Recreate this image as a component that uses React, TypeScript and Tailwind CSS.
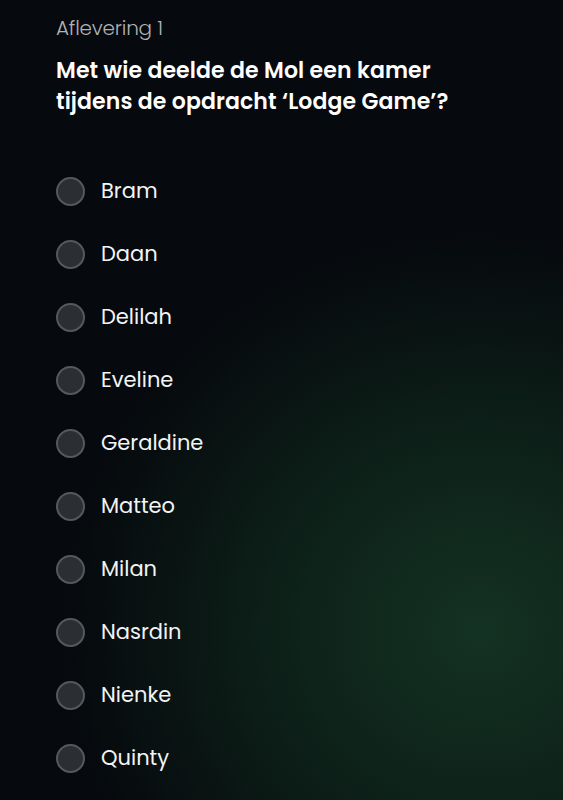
import React from "react";

const names = ["Bram", "Daan", "Delilah", "Eveline", "Geraldine", "Matteo", "Milan", "Nasrdin", "Nienke", "Quinty"];

export default function App() {
  return (
    <div
      className="relative w-[563px] h-[800px] overflow-hidden bg-[#06090d] text-white"
      style={{ fontFamily: "Poppins, 'Open Sans', 'Noto Sans', sans-serif" }}
    >
      <div className="pointer-events-none absolute inset-0 bg-[radial-gradient(ellipse_420px_400px_at_480px_630px,#143223_0%,#0e231a_42%,rgba(6,9,13,0)_100%)]" />
      <div className="relative px-[56px] pt-[14px]">
        <div className="text-[20px] leading-[28px] font-light text-[#b0b2b4] tracking-[-0.2px]">Aflevering 1</div>
        <h1 className="mt-[13px] text-[22px] leading-[31px] font-semibold tracking-[0.1px]">
          Met wie deelde de Mol een kamer
          <br />
          tijdens de opdracht ‘Lodge Game’?
        </h1>
        <div className="mt-[60px] flex flex-col gap-[35px]">
          {names.map((n) => (
            <div key={n} className="flex items-center h-[28px]">
              <div className="w-[29px] h-[29px] rounded-full bg-[#2b2e33] border-2 border-[#55585d] shrink-0" />
              <span className="ml-[16px] text-[21px] leading-[28px] text-[#f3f4f5]">{n}</span>
            </div>
          ))}
        </div>
      </div>
    </div>
  );
}
